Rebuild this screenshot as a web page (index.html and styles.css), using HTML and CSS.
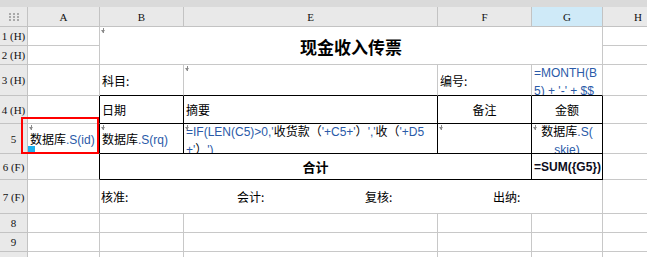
FILE: index.html
```html
<!DOCTYPE html>
<html lang="zh-CN">
<head>
<meta charset="utf-8">
<title>现金收入传票</title>
<link rel="stylesheet" href="styles.css">
</head>
<body>
<div class="sheet">
  <div class="topbar"></div>
  <div class="grid">
    <!-- header row -->
    <div class="c hd corner">
      <svg width="10" height="8" viewBox="0 0 10 8"><g fill="#a9a9a9"><rect x="0" y="0" width="2" height="2"/><rect x="4" y="0" width="2" height="2"/><rect x="8" y="0" width="2" height="2"/><rect x="0" y="3" width="2" height="2"/><rect x="4" y="3" width="2" height="2"/><rect x="8" y="3" width="2" height="2"/><rect x="0" y="6" width="2" height="2"/><rect x="4" y="6" width="2" height="2"/><rect x="8" y="6" width="2" height="2"/></g></svg>
    </div>
    <div class="c hd">A</div>
    <div class="c hd">B</div>
    <div class="c hd">E</div>
    <div class="c hd">F</div>
    <div class="c hd active">G</div>
    <div class="c hd">H</div>

    <!-- row 1 -->
    <div class="c rh">1 (H)</div>
    <div class="c"></div>
    <div class="c title"><span class="mk"></span>现金收入传票</div>
    <div class="c"></div>

    <!-- row 2 -->
    <div class="c rh">2 (H)</div>
    <div class="c"></div>
    <div class="c"></div>

    <!-- row 3 -->
    <div class="c rh">3 (H)</div>
    <div class="c"></div>
    <div class="c bb cn">科目:</div>
    <div class="c bb"><span class="mk"></span></div>
    <div class="c bb cn">编号:</div>
    <div class="c bb top"><div class="wrap formula">=MONTH(B5) + '-' + $$</div></div>
    <div class="c"></div>

    <!-- row 4 -->
    <div class="c rh">4 (H)</div>
    <div class="c br"></div>
    <div class="c br bb cn">日期</div>
    <div class="c br bb cn">摘要</div>
    <div class="c br bb cn center">备注</div>
    <div class="c br bb cn center">金额</div>
    <div class="c"></div>

    <!-- row 5 -->
    <div class="c rh">5</div>
    <div class="c br"><span class="mk"></span><span class="formula"><span class="cn">数据库</span>.S(id)</span></div>
    <div class="c br bb"><span class="mk"></span><span class="formula"><span class="cn">数据库</span>.S(rq)</span></div>
    <div class="c br bb top"><span class="mk"></span><div class="wrap formula">=IF(LEN(C5)&gt;0,'<span class="cn">收货款（</span>'+C5+'<span class="cn">）</span>','<span class="cn">收（</span>'+D5<br>+'<span class="cn">）</span>')</div></div>
    <div class="c br bb"><span class="mk"></span></div>
    <div class="c br bb top"><span class="mk"></span><div class="wrap formula center"><span class="cn">数据库</span>.S(<br>skje)</div></div>
    <div class="c"></div>

    <!-- row 6 -->
    <div class="c rh">6 (F)</div>
    <div class="c br"></div>
    <div class="c br bb total">合计</div>
    <div class="c br bb sum">=SUM({G5})</div>
    <div class="c"></div>

    <!-- row 7 -->
    <div class="c rh">7 (F)</div>
    <div class="c"></div>
    <div class="c sign">
      <span class="sg w1">核准:</span>
      <span class="sg w2">会计:</span>
      <span class="sg w2">复核:</span>
      <span class="sg">出纳:</span>
    </div>
    <div class="c"></div>

    <!-- row 8 -->
    <div class="c rh">8</div>
    <div class="c"></div><div class="c"></div><div class="c"></div><div class="c"></div><div class="c"></div><div class="c"></div>

    <!-- row 9 -->
    <div class="c rh">9</div>
    <div class="c"></div><div class="c"></div><div class="c"></div><div class="c"></div><div class="c"></div><div class="c"></div>

    <!-- row 10 -->
    <div class="c rh"></div>
    <div class="c"></div><div class="c"></div><div class="c"></div><div class="c"></div><div class="c"></div><div class="c"></div>
  </div>
  <div class="selection"></div>
  <div class="handle"></div>
</div>
</body>
</html>
```

FILE: styles.css
```css
* { box-sizing: border-box; }
html, body { margin: 0; padding: 0; }
body {
  width: 647px;
  height: 257px;
  overflow: hidden;
  background: #fff;
  color: #000;
  font-family: "Liberation Sans", "Noto Sans CJK SC", sans-serif;
  font-size: 12px;
}
.sheet {
  position: relative;
  width: 647px;
  height: 257px;
  overflow: hidden;
}
.topbar {
  height: 7px;
  background: #dadada;
}
.grid {
  display: grid;
  grid-template-columns: 28px 72px 84px 254px 94px 71px 71px;
  grid-template-rows: 20px 19px 19px 31px 28px 30px 26px 34px 19px 19px 20px;
}
.c {
  position: relative;
  display: flex;
  align-items: center;
  padding: 0 2px;
  overflow: hidden;
  white-space: nowrap;
  border-right: 1px solid #c8c8c8;
  border-bottom: 1px solid #c8c8c8;
}
.c.top { align-items: flex-start; }
.hd {
  justify-content: center;
  background: #e9e9e9;
  border-color: #c3c3c3;
  font-family: "Liberation Serif", serif;
  font-size: 11px;
  color: #111;
}
.hd.active { background: #cfeaf8; }
.corner { padding: 0; }
.rh {
  justify-content: center;
  padding: 0;
  background: #e9e9e9;
  border-color: #c3c3c3;
  font-family: "Liberation Serif", serif;
  font-size: 11px;
  color: #111;
}
.cn { font-family: "Noto Sans CJK SC", sans-serif; color: #000; }
.title {
  grid-column: span 4;
  grid-row: span 2;
  justify-content: center;
  font-family: "Noto Sans CJK SC", sans-serif;
  font-weight: 700;
  font-size: 17px;
  padding-top: 2px;
}
.br { border-right-color: #000; }
.bb { border-bottom-color: #000; }
.center { justify-content: center; text-align: center; }
.wrap {
  width: 100%;
  margin-top: -1px;
  white-space: normal;
  word-break: break-all;
  line-height: 18px;
}
.wrap .cn { line-height: 12px; }
.formula { color: #2a5aa8; }
.total {
  grid-column: span 3;
  justify-content: center;
  font-family: "Noto Sans CJK SC", sans-serif;
  font-weight: 700;
  font-size: 13px;
}
.sum {
  font-weight: 700;
  color: #0c0c20;
  padding-left: 2px;
}
.sign {
  grid-column: span 4;
  padding-left: 1px;
  font-family: "Noto Sans CJK SC", sans-serif;
}
.sg { display: inline-block; }
.w1 { width: 136px; }
.w2 { width: 128px; }
.mk {
  position: absolute;
  left: 1px;
  top: 1px;
  width: 5px;
  height: 5px;
}
.mk::before {
  content: "";
  position: absolute;
  left: 2px;
  top: 0;
  width: 1px;
  height: 5px;
  background: #8a8a8a;
}
.mk::after {
  content: "";
  position: absolute;
  left: 0;
  top: 2px;
  width: 0;
  height: 0;
  border-left: 2.5px solid transparent;
  border-right: 2.5px solid transparent;
  border-top: 3px solid #8a8a8a;
}
.selection {
  position: absolute;
  left: 21px;
  top: 117px;
  width: 78px;
  height: 37px;
  border: 2px solid #f00;
}
.handle {
  position: absolute;
  left: 28px;
  top: 146px;
  width: 7px;
  height: 6px;
  background: #1ab2ee;
}
```
